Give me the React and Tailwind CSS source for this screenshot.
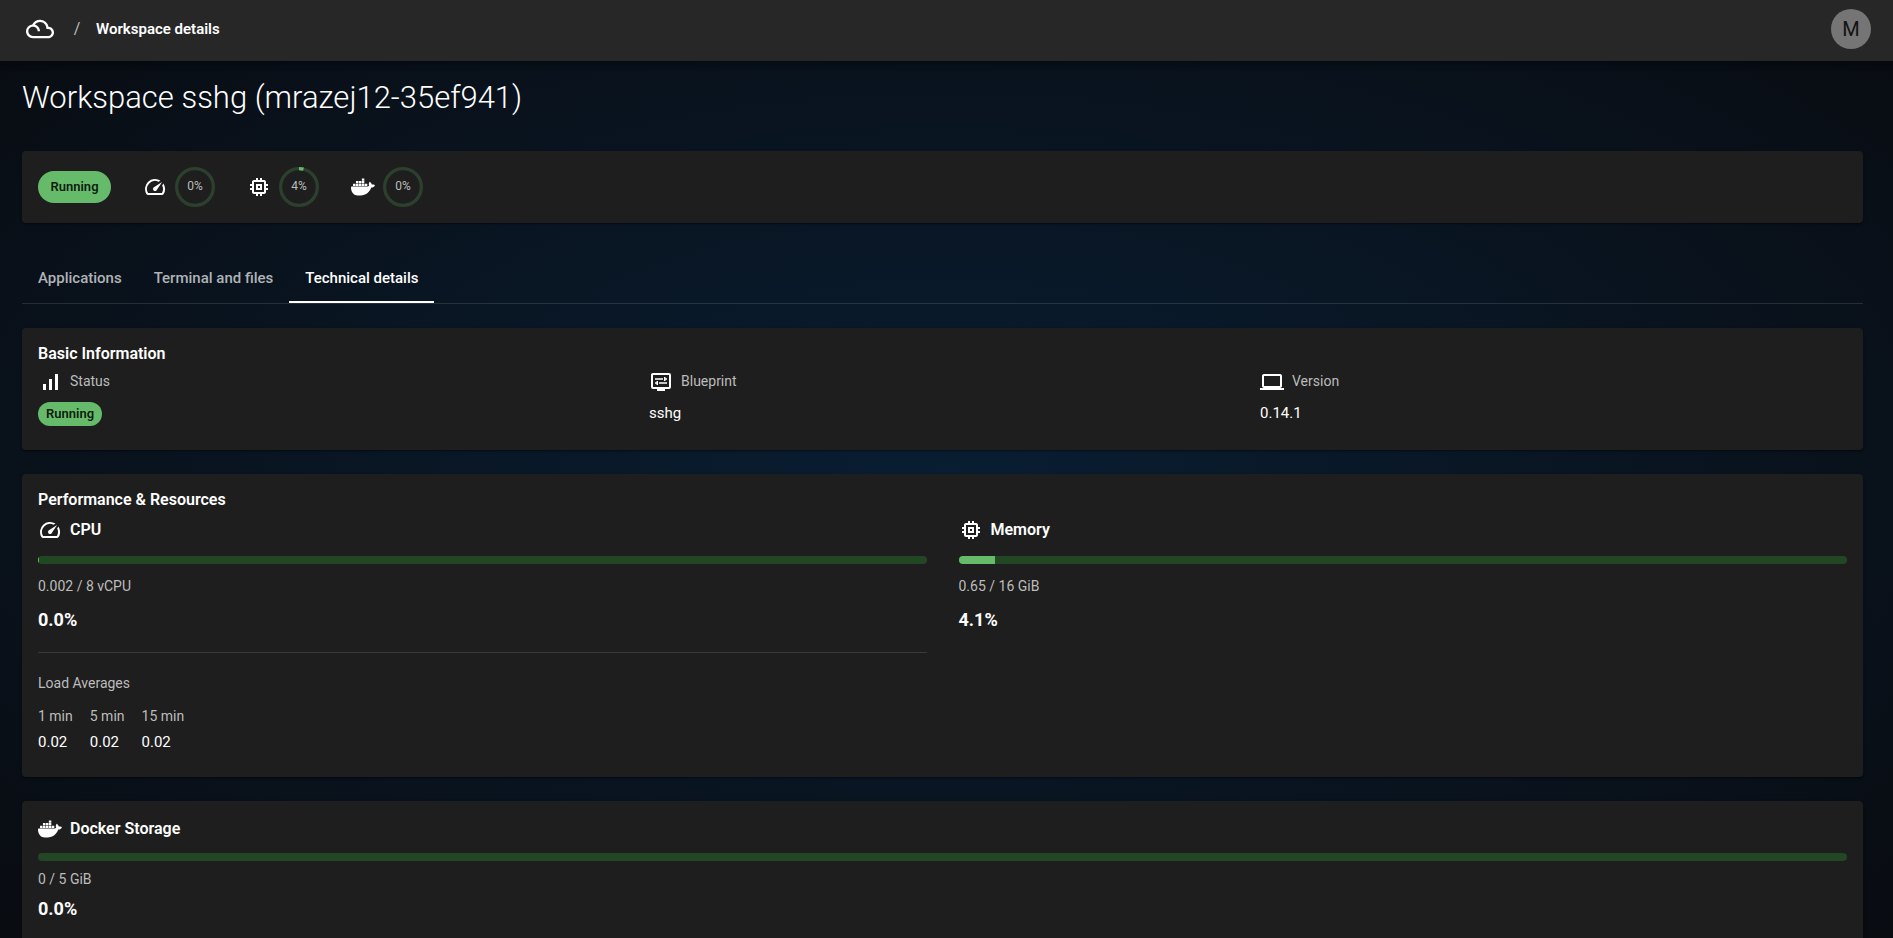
import React from 'react';
import {
  MdOutlineFilterDrama,
  MdOutlineSpeed,
  MdOutlineMemory,
  MdSignalCellularAlt,
  MdOutlineDisplaySettings,
  MdOutlineLaptop,
} from 'react-icons/md';
import { SiDocker } from 'react-icons/si';

const workspace = {
  title: 'Workspace sshg (mrazej12-35ef941)',
  status: 'Running',
  blueprint: 'sshg',
  version: '0.14.1',
};

const gauges = [
  { id: 'cpu', label: 'CPU usage', icon: MdOutlineSpeed, percent: 0 },
  { id: 'memory', label: 'Memory usage', icon: MdOutlineMemory, percent: 4 },
  { id: 'docker', label: 'Docker storage usage', icon: SiDocker, percent: 0 },
];

const tabs = ['Applications', 'Terminal and files', 'Technical details'];

const loadAverages = [
  { label: '1 min', value: '0.02' },
  { label: '5 min', value: '0.02' },
  { label: '15 min', value: '0.02' },
];

function Card({ className = '', children }) {
  return (
    <section className={`rounded bg-[#1e1e1e] px-4 shadow-[0_2px_1px_-1px_rgba(0,0,0,0.2),0_1px_1px_rgba(0,0,0,0.14),0_1px_3px_rgba(0,0,0,0.12)] ${className}`}>
      {children}
    </section>
  );
}

function CircularGauge({ percent, label }) {
  const circumference = 2 * Math.PI * 20.2;

  return (
    <div className="relative flex size-10 items-center justify-center" role="img" aria-label={`${label}: ${percent}%`}>
      <svg viewBox="0 0 44 44" className="absolute inset-0 size-10 -rotate-90" fill="none" strokeWidth="3.6">
        <circle cx="22" cy="22" r="20.2" stroke="#2c402d" />
        {percent > 0 && (
          <circle
            cx="22"
            cy="22"
            r="20.2"
            stroke="#66bb6a"
            strokeDasharray={`${(circumference * percent) / 100} ${circumference}`}
          />
        )}
      </svg>
      <span className="relative pb-0.5 text-xs leading-4 text-[#bcbcbc]">{percent}%</span>
    </div>
  );
}

function ProgressBar({ percent, label }) {
  return (
    <div
      className="h-2 overflow-hidden rounded bg-[#234624]"
      role="progressbar"
      aria-label={label}
      aria-valuenow={percent}
      aria-valuemin={0}
      aria-valuemax={100}
    >
      <div className="h-full bg-[#66bb6a]" style={{ width: `${percent}%` }}></div>
    </div>
  );
}

function IconLabel({ icon: Icon, children }) {
  return (
    <div className="flex h-6 items-center gap-2">
      <Icon className="size-6" />
      <h3 className="text-base font-semibold">{children}</h3>
    </div>
  );
}

function InfoItem({ icon: Icon, label, children }) {
  return (
    <div>
      <dt className="flex h-6 items-center gap-2">
        <Icon className="size-6" />
        <span className="pb-0.5 text-sm text-[#bcbcbc]">{label}</span>
      </dt>
      <dd className="mt-2 text-[15px] leading-[22px]">{children}</dd>
    </div>
  );
}

function Header() {
  return (
    <header className="relative z-10 flex h-[61px] shrink-0 items-center justify-between bg-[#272727] pb-1 pl-[26px] pr-[22px] shadow-[0_2px_4px_-1px_rgba(0,0,0,0.2),0_4px_5px_rgba(0,0,0,0.14),0_1px_10px_rgba(0,0,0,0.12)]">
      <nav className="flex items-center" aria-label="Breadcrumb">
        <a href="#" aria-label="Workspaces">
          <MdOutlineFilterDrama className="size-7" />
        </a>
        <span className="w-[42px] pl-1 text-center text-base text-[#bcbcbc]">/</span>
        <span className="text-[15px] font-semibold leading-6">Workspace details</span>
      </nav>
      <button className="size-10 rounded-full bg-[#757575] text-xl leading-10 text-[#121212]" aria-label="Account">
        M
      </button>
    </header>
  );
}

function StatusBar() {
  return (
    <Card className="mt-8 flex h-[72px] items-center gap-8">
      <span className="flex h-8 min-w-[73px] items-center justify-center rounded-full bg-[#66bb6a] px-3 text-[13px] font-semibold text-black/87">
        {workspace.status}
      </span>
      {gauges.map(({ id, label, icon: Icon, percent }) => (
        <div key={id} className="flex items-center gap-2">
          <Icon className="size-6" />
          <CircularGauge percent={percent} label={label} />
        </div>
      ))}
    </Card>
  );
}

function Tabs() {
  const active = 'Technical details';

  return (
    <div className="mt-8 flex border-b border-white/12" role="tablist">
      {tabs.map((tab) => (
        <button
          key={tab}
          role="tab"
          aria-selected={tab === active}
          className={`h-12 border-b-2 px-4 text-[15px] font-medium ${
            tab === active ? 'border-white text-white' : 'border-transparent text-[#b0b3b6]'
          }`}
        >
          {tab}
        </button>
      ))}
    </div>
  );
}

function BasicInformation() {
  return (
    <Card className="mt-6 pb-6 pt-3.5">
      <h2 className="text-base font-semibold">Basic Information</h2>
      <dl className="mt-1 grid grid-cols-3 gap-6">
        <InfoItem icon={MdSignalCellularAlt} label="Status">
          <span className="flex h-6 w-fit items-center rounded-full bg-[#66bb6a] px-2 text-[13px] font-semibold text-black/87">
            {workspace.status}
          </span>
        </InfoItem>
        <InfoItem icon={MdOutlineDisplaySettings} label="Blueprint">
          {workspace.blueprint}
        </InfoItem>
        <InfoItem icon={MdOutlineLaptop} label="Version">
          {workspace.version}
        </InfoItem>
      </dl>
    </Card>
  );
}

function Performance() {
  return (
    <Card className="mt-6 pb-6 pt-3.5">
      <h2 className="text-base font-semibold">Performance &amp; Resources</h2>
      <div className="mt-1.5 grid grid-cols-2 gap-8">
        <div>
          <IconLabel icon={MdOutlineSpeed}>CPU</IconLabel>
          <div className="mt-3.5">
            <ProgressBar percent={0.02} label="CPU" />
          </div>
          <p className="mt-3 text-sm text-[#bcbcbc]">0.002 / 8 vCPU</p>
          <p className="mt-2.5 text-lg font-bold">0.0%</p>
          <hr className="mb-5 mt-[18px] border-white/12" />
          <h4 className="text-sm text-[#bcbcbc]">Load Averages</h4>
          <dl className="mt-3 flex gap-[17px]">
            {loadAverages.map(({ label, value }) => (
              <div key={label}>
                <dt className="text-sm leading-[22px] text-[#bcbcbc]">{label}</dt>
                <dd className="mt-1 text-[15px] leading-[22px]">{value}</dd>
              </div>
            ))}
          </dl>
        </div>
        <div>
          <IconLabel icon={MdOutlineMemory}>Memory</IconLabel>
          <div className="mt-3.5">
            <ProgressBar percent={4.1} label="Memory" />
          </div>
          <p className="mt-3 text-sm text-[#bcbcbc]">0.65 / 16 GiB</p>
          <p className="mt-2.5 text-lg font-bold">4.1%</p>
        </div>
      </div>
    </Card>
  );
}

function DockerStorage() {
  return (
    <Card className="mt-6 pb-6 pt-4">
      <IconLabel icon={SiDocker}>Docker Storage</IconLabel>
      <div className="mt-3">
        <ProgressBar percent={0} label="Docker Storage" />
      </div>
      <p className="mt-2 text-sm text-[#bcbcbc]">0 / 5 GiB</p>
      <p className="mt-1.5 text-lg font-bold">0.0%</p>
    </Card>
  );
}

export default function App() {
  return (
    <div className="flex h-screen flex-col overflow-hidden bg-[#121212] bg-[radial-gradient(at_50%_50%,hsla(210,100%,16%,0.5),hsl(220,30%,5%))] font-['Roboto',sans-serif] text-white">
      <Header />
      <main className="min-h-0 flex-1 overflow-y-auto pb-6 pl-[22px] pr-[30px] pt-4 [scrollbar-width:none]">
        <h1 className="text-[31px] font-light leading-[42px]">{workspace.title}</h1>
        <StatusBar />
        <Tabs />
        <BasicInformation />
        <Performance />
        <DockerStorage />
      </main>
    </div>
  );
}
